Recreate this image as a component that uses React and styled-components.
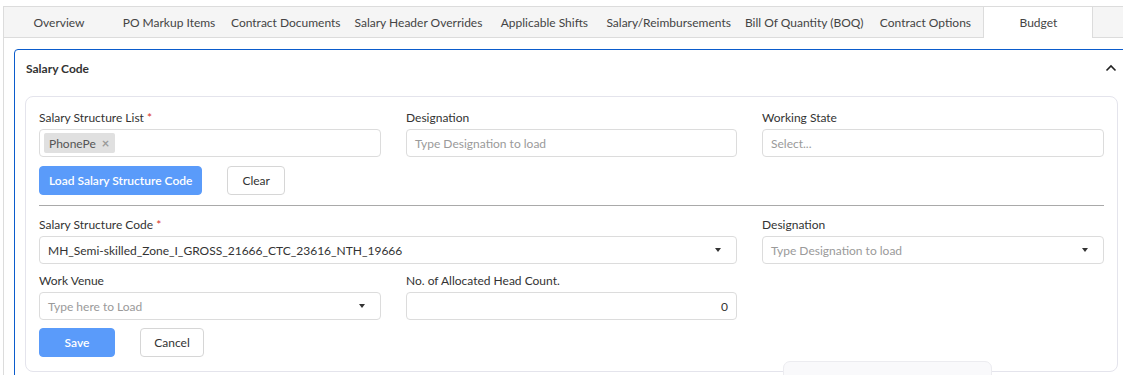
import React from "react"
import styled, { createGlobalStyle } from "styled-components"

const GlobalStyle = createGlobalStyle`
  html, body {
    margin: 0;
    padding: 0;
    background: #fff;
    overflow: hidden;
  }
  body {
    font-family: Lato, "Noto Sans", sans-serif;
    font-size: 12px;
    color: #333;
  }
`

const Page = styled.div`
  width: 1131px;
  margin: 6px 0 0 3px;
  border-left: 1px solid #dcdcdc;
  border-top: 1px solid #dcdcdc;
  position: relative;
  height: 369px;
`

const TabBar = styled.div`
  display: flex;
  height: 30px;
  background: #f5f5f5;
  border-bottom: 1px solid #dcdcdc;
`

const Tab = styled.div`
  min-width: 110px;
  padding: 0 7px;
  box-sizing: border-box;
  display: flex;
  align-items: center;
  justify-content: center;
  font-size: 12px;
  color: #444;
  white-space: nowrap;
  cursor: pointer;
  ${({ $active }) =>
    $active &&
    `
    background: #fff;
    border-left: 1px solid #dcdcdc;
    border-right: 1px solid #dcdcdc;
    height: 31px;
    margin-left: 3px;
  `}
`

const Card = styled.div`
  margin: 11px 0 0 10px;
  border: 1.5px solid #0b5ccc;
  border-radius: 4px;
  height: 330px;
`

const CardHeader = styled.div`
  display: flex;
  align-items: center;
  justify-content: space-between;
  height: 36px;
  padding: 0 17px 0 11px;
`

const CardTitle = styled.div`
  font-weight: 700;
  font-size: 12px;
  color: #333;
`

const CardBody = styled.div`
  padding: 10px 10px 0 10px;
`

const Panel = styled.div`
  width: 1093px;
  box-sizing: border-box;
  border: 1px solid #e4e4ec;
  border-radius: 8px;
  padding: 13px 13px 14px 13px;
`

const Grid = styled.div`
  display: grid;
  grid-template-columns: 342px 331px 342px;
  column-gap: 25px;
  row-gap: 9px;
  align-items: start;
`

const Field = styled.div`
  display: flex;
  flex-direction: column;
  gap: 4px;
  grid-column: ${({ $span }) => ($span ? `span ${$span}` : "auto")};
`

const Label = styled.label`
  font-size: 12px;
  line-height: 15px;
  color: #333;
  span {
    color: #d9342b;
  }
`

const Input = styled.div`
  height: 28px;
  box-sizing: border-box;
  border: 1px solid #dcdcdc;
  border-radius: 4px;
  display: flex;
  align-items: center;
  padding: 0 ${({ $select }) => ($select ? "15px" : "8px")} 0 8px;
  justify-content: ${({ $right }) => ($right ? "flex-end" : "space-between")};
  font-size: 12px;
  color: ${({ $placeholder }) => ($placeholder ? "#9a9a9a" : "#333")};
  background: #fff;
`

const Caret = styled.span`
  width: 0;
  height: 0;
  border-left: 3.5px solid transparent;
  border-right: 3.5px solid transparent;
  border-top: 4px solid #333;
`

const Tag = styled.span`
  display: inline-flex;
  align-items: center;
  gap: 6px;
  height: 20px;
  padding: 0 6px 0 5px;
  margin-left: -4px;
  background: #e0e0e0;
  border-radius: 2px;
  color: #555;
  font-size: 12px;
`

const TagClose = styled.span`
  color: #9a9a9a;
  font-size: 13px;
  font-weight: 700;
  line-height: 1;
`

const ButtonRow = styled.div`
  display: flex;
  gap: 25px;
  margin-top: ${({ $top }) => $top || 9}px;
`

const Button = styled.button`
  height: 29px;
  padding: 0 ${({ $pad }) => $pad || 9}px;
  min-width: ${({ $min }) => $min || 0}px;
  border-radius: 4px;
  font-family: inherit;
  font-size: 12px;
  font-weight: ${({ $primary }) => ($primary ? 600 : 400)};
  cursor: pointer;
  border: 1px solid ${({ $primary }) => ($primary ? "#5a9bfa" : "#d6d6d6")};
  background: ${({ $primary }) => ($primary ? "#5a9bfa" : "#fff")};
  color: ${({ $primary }) => ($primary ? "#fff" : "#333")};
`

const Divider = styled.hr`
  border: none;
  border-top: 1px solid #a9a9a9;
  margin: 10px 0 11px;
`

const Popover = styled.div`
  position: absolute;
  left: 779px;
  top: 354px;
  width: 207px;
  height: 30px;
  background: #f9f9fb;
  border: 1px solid #ececf0;
  border-radius: 7px;
`

const ChevronUp = () => (
  <svg width="12" height="8" viewBox="0 0 12 8">
    <path d="M1.5 6.5 L6 2 L10.5 6.5" fill="none" stroke="#222" strokeWidth="1.6" />
  </svg>
)

const tabs = [
  "Overview",
  "PO Markup Items",
  "Contract Documents",
  "Salary Header Overrides",
  "Applicable Shifts",
  "Salary/Reimbursements",
  "Bill Of Quantity (BOQ)",
  "Contract Options",
  "Budget",
]

export default function App() {
  return (
    <>
      <GlobalStyle />
      <Page>
        <TabBar>
          {tabs.map((t) => (
            <Tab key={t} $active={t === "Budget"}>
              {t}
            </Tab>
          ))}
        </TabBar>
        <Card>
          <CardHeader>
            <CardTitle>Salary Code</CardTitle>
            <ChevronUp />
          </CardHeader>
          <CardBody>
            <Panel>
              <Grid>
                <div>
                  <Field>
                    <Label>
                      Salary Structure List <span>*</span>
                    </Label>
                    <Input>
                      <Tag>
                        PhonePe <TagClose>×</TagClose>
                      </Tag>
                    </Input>
                  </Field>
                  <ButtonRow>
                    <Button $primary>Load Salary Structure Code</Button>
                    <Button $pad={14}>Clear</Button>
                  </ButtonRow>
                </div>
                <Field>
                  <Label>Designation</Label>
                  <Input $placeholder>Type Designation to load</Input>
                </Field>
                <Field>
                  <Label>Working State</Label>
                  <Input $placeholder>Select...</Input>
                </Field>
              </Grid>
              <Divider />
              <Grid>
                <Field $span={2}>
                  <Label>
                    Salary Structure Code <span>*</span>
                  </Label>
                  <Input $select>
                    MH_Semi-skilled_Zone_I_GROSS_21666_CTC_23616_NTH_19666
                    <Caret />
                  </Input>
                </Field>
                <Field>
                  <Label>Designation</Label>
                  <Input $select $placeholder>
                    Type Designation to load
                    <Caret />
                  </Input>
                </Field>
                <Field>
                  <Label>Work Venue</Label>
                  <Input $select $placeholder>
                    Type here to Load
                    <Caret />
                  </Input>
                </Field>
                <Field>
                  <Label>No. of Allocated Head Count.</Label>
                  <Input $right>0</Input>
                </Field>
              </Grid>
              <ButtonRow $top={8}>
                <Button $primary $min={76}>Save</Button>
                <Button $min={64}>Cancel</Button>
              </ButtonRow>
            </Panel>
          </CardBody>
        </Card>
        <Popover />
      </Page>
    </>
  )
}
